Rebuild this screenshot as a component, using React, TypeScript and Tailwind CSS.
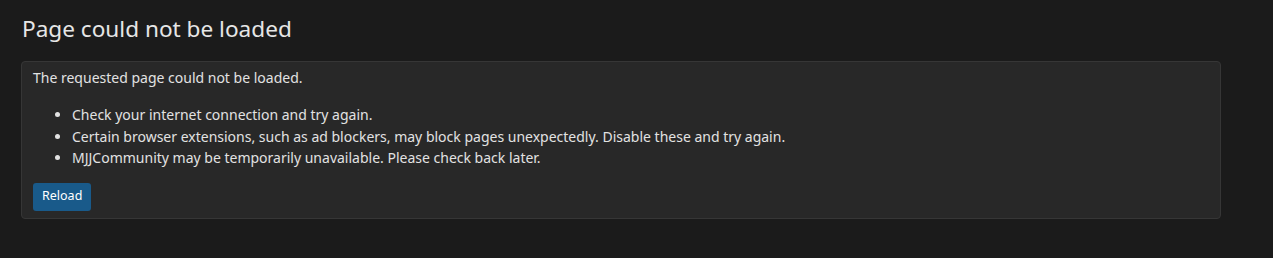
export default function App() {
  return (
    <div
      className="min-h-[258px] w-full bg-[#1b1b1b] text-[#e2e2e2] pl-[21px] pr-[52px] pt-[12px] pb-6"
      style={{ fontFamily: '"Noto Sans", "Open Sans", sans-serif' }}
    >
      <h1 className="text-[22.6px] leading-[34px] font-normal text-[#e6e6e6] pl-px">Page could not be loaded</h1>
      <div className="mt-[15px] rounded-[4px] border border-[#363636] bg-[#282828] px-[11px] pt-[6px] pb-[6px]">
        <p className="text-[14px] leading-[20px]">The requested page could not be loaded.</p>
        <ul className="mt-[16px] list-disc pl-[39px] text-[14px] leading-[21.5px]">
          <li>Check your internet connection and try again.</li>
          <li>Certain browser extensions, such as ad blockers, may block pages unexpectedly. Disable these and try again.</li>
          <li>MJJCommunity may be temporarily unavailable. Please check back later.</li>
        </ul>
        <button className="mt-[14px] mb-px h-[28px] rounded-[3px] bg-[#195a8a] px-[9px] text-[12.5px] text-white">
          Reload
        </button>
      </div>
    </div>
  );
}
